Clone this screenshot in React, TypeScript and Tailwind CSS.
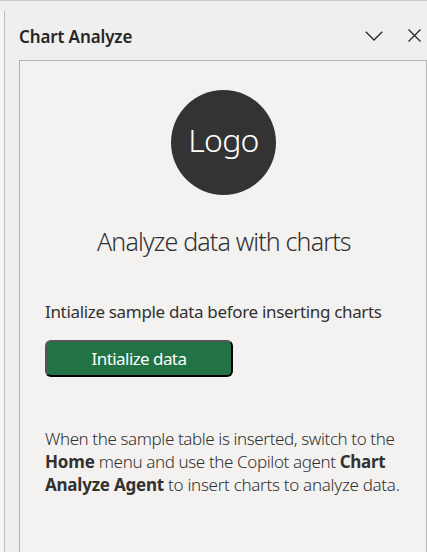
export default function App() {
  return (
    <div className="flex h-[552px] w-[427px] flex-col overflow-hidden border-t border-[#cecece] bg-[#efefef] font-['Noto_Sans','Open_Sans',sans-serif] text-[#323130]">
      <div className="flex min-h-0 flex-1 pt-[10px]">
        <div className="w-1 shrink-0 rounded-tr-sm bg-[#f4f4f4]" />
        <div className="flex min-w-0 flex-1 flex-col border-l border-[#bebebe] pl-[14px]">
          <header className="flex h-[49px] shrink-0 items-center justify-between pr-[6px]">
            <h1 className="whitespace-nowrap pt-[3px] text-[17px] font-semibold leading-6 tracking-[-0.12px] text-[#262626]">Chart Analyze</h1>
            <div className="flex items-center gap-[25px] text-[#262626]">
              <svg width="18" height="10" viewBox="0 0 18 10" fill="none" stroke="currentColor" strokeWidth="1.3">
                <path d="M.8 .8 9 9 17.2 .8" />
              </svg>
              <svg width="13" height="13" viewBox="0 0 13 13" fill="none" stroke="currentColor" strokeWidth="1.3">
                <path d="M.5 .5l12 12M12.5 .5l-12 12" />
              </svg>
            </div>
          </header>
          <main className="flex flex-1 flex-col border-x border-t border-[#b4b4b4] bg-[#f3f2f1] pl-[25px]">
            <div className="ml-[126px] mt-[29px] flex size-[105px] shrink-0 items-center justify-center rounded-full bg-[#333333]">
              <span className="pb-1.5 text-[32px] font-light leading-none tracking-[-0.7px] text-white">Logo</span>
            </div>
            <h2 className="ml-[52px] mt-[30px] whitespace-nowrap text-[25px] font-light leading-8 tracking-[-0.85px]">Analyze data with charts</h2>
            <p className="mt-[43px] whitespace-nowrap text-[17px] leading-6 tracking-[-0.33px]">Intialize sample data before inserting charts</p>
            <button className="mt-4 flex h-[37px] w-[188px] items-center justify-center rounded-[6px] border-2 border-b-black border-l-[#555] border-r-black border-t-[#555] bg-[#217346] text-[17px] tracking-[-0.57px] text-white">
              <span>Intialize data</span>
            </button>
            <p className="mt-[50px] whitespace-nowrap text-[17px] font-light leading-[23px]">
              <span className="tracking-[-0.4px]">When the sample table is inserted, switch to the</span><br />
              <span className="tracking-[-0.38px]"><b className="font-bold tracking-[-0.15px]">Home</b> menu and use the Copilot agent <b className="font-bold tracking-[-0.3px]">Chart</b></span><br />
              <span className="tracking-[-0.3px]"><b className="font-bold tracking-[-0.22px]">Analyze Agent</b> to insert charts to analyze data.</span>
            </p>
          </main>
        </div>
      </div>
    </div>
  );
}
